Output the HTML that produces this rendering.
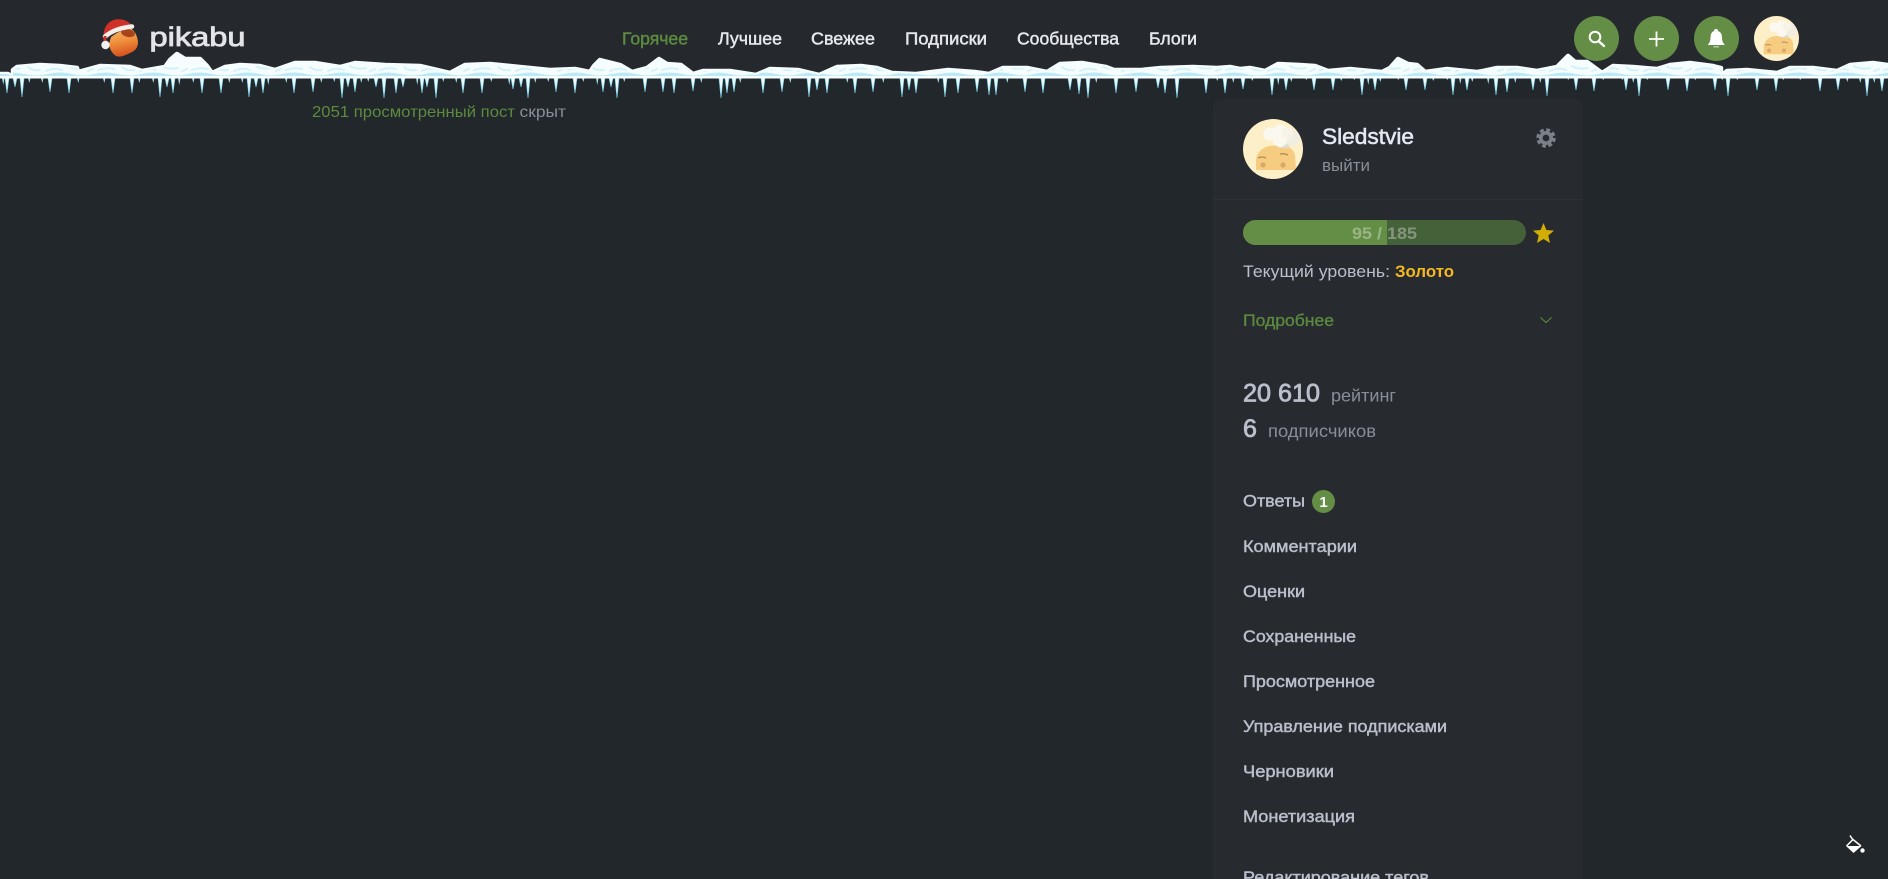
<!DOCTYPE html>
<html lang="ru">
<head>
<meta charset="utf-8">
<title>Просмотренное – Pikabu</title>
<style>
html,body{margin:0;padding:0;width:1888px;height:879px;overflow:hidden;background:#22272b}
svg{display:block;position:absolute;left:0;top:0}
text{font-family:"Liberation Sans",Arial,sans-serif}
.m{stroke-width:.45px;stroke:currentColor}
.nav{font-size:17.5px;fill:#e6e8ec;color:#e6e8ec}
.side{font-size:17px;fill:#b9bfcb;color:#b9bfcb}
.gray{font-size:16.5px;fill:#888e97}
</style>
</head>
<body>
<svg width="1888" height="879" viewBox="0 0 1888 879" xmlns="http://www.w3.org/2000/svg">
<defs>
<path id="snow" d="M0 78V74L8 74L13 77L13 70L17 67L40 65L60 66L77 68L78 72L100 66L130 67L142 71L165 67L170 60L177 54L185 59L200 59L207 66L212 73L225 67L240 65L260 66L275 70L295 63L315 63L340 67L355 63L385 65L420 66L450 73L465 65L490 64L520 67L550 70L575 69L590 72L594 66L600 60L620 65L632 72L647 68L659 59L667 64L681 65L693 74L703 71L730 71L756 75L770 69L798 70L819 75L837 67L861 66L877 68L892 73L916 74L948 70L975 72L989 74L1003 68L1027 68L1047 72L1060 64L1082 63L1106 67L1114 70L1141 70L1161 68L1193 67L1217 68L1230 67L1240 69L1250 68L1265 71L1278 64L1300 65L1315 66L1328 71L1350 69L1360 70L1382 72L1390 68L1398 59L1408 64L1417 65L1425 72L1447 69L1457 70L1477 72L1483 71L1497 68L1517 68L1537 71L1557 67L1568 56L1575 62L1587 62L1602 73L1613 66L1633 67L1657 69L1670 65L1690 63L1713 66L1721 68L1721 77L1722 75L1727 71L1747 70L1777 73L1790 68L1813 68L1837 71L1850 65L1873 63L1888 65V78Z"/>
<pattern id="tex" patternUnits="userSpaceOnUse" width="94" height="78">
<path d="M0 74Q12 71 24 74T48 74T72 74T94 74V76H0Z" fill="#bce9f6"/>
<g fill="none" stroke="#d4f1fa" stroke-width="2" stroke-linecap="round">
<path d="M4 70Q12 67 20 69"/><path d="M28 67Q32 71 40 70"/><path d="M46 71Q54 67 62 70"/><path d="M68 66Q74 70 84 68"/><path d="M88 71L93 69"/>
</g>
</pattern>
<linearGradient id="body" x1="0" y1="0" x2=".2" y2="1"><stop offset="0" stop-color="#f8bd6d"/><stop offset=".5" stop-color="#f0933f"/><stop offset="1" stop-color="#d9551f"/></linearGradient>
<clipPath id="pf"><rect x="1243" y="220" width="144" height="25"/></clipPath>
<clipPath id="snowclip"><rect x="0" y="40" width="1888" height="38.500"/></clipPath>
<clipPath id="avc"><circle cx="30" cy="30" r="30"/></clipPath>
<symbol id="ava" viewBox="0 0 60 60">
<g clip-path="url(#avc)">
<rect width="60" height="60" fill="#fdf0c9"/>
<path d="M13 51V40Q15 30 26 27L40 26Q50 28 52 36L53 51Z" fill="#f6cd80"/>
<path d="M15 39Q19 37 23 39M37 35Q41 34 45 36" stroke="#b48a55" stroke-width="1.300" fill="none"/>
<circle cx="20" cy="46" r="2.600" fill="#d9a76a"/><circle cx="40" cy="46" r="2.600" fill="#d9a76a"/>
<path d="M32 20L48 18L46 29L36 29Z" fill="#e0dccf"/>
<circle cx="27" cy="15" r="6.500" fill="#fbf8ef"/><circle cx="37" cy="13" r="7.500" fill="#fbf8ef"/><circle cx="49" cy="19" r="8" fill="#f1ede0"/><circle cx="37" cy="21" r="7" fill="#fbf8ef"/><circle cx="44" cy="14" r="6" fill="#f7f3e8"/>
</g>
</symbol>
</defs>

<rect width="1888" height="79" fill="#25292e"/>
<rect x="1213" y="99" width="370" height="800" rx="8" fill="#272b2f"/>

<!-- logo -->
<path d="M111 37Q120 30 130 28Q137 32 138 42Q138 50 130 53Q120 58 116 56Q110 52 109 44Z" fill="url(#body)"/>
<ellipse cx="128" cy="33" rx="7" ry="4" fill="#a8441c" transform="rotate(12 128 33)"/>
<path d="M103.500 38Q103 23 115 19.500Q126 18 132 25.500L106 37Z" fill="#d0302a"/>
<path d="M105 36.500Q115 28 132 26.500" fill="none" stroke="#f5efe9" stroke-width="4.500" stroke-linecap="round"/>
<rect x="103.500" y="36" width="3" height="6" fill="#d0302a"/>
<circle cx="105.500" cy="45" r="4.200" fill="#f0f0f0"/>
<text x="149.500" y="46" font-size="27" textLength="96" lengthAdjust="spacingAndGlyphs" fill="#e3e4e8" stroke="#e3e4e8" stroke-width=".8">pikabu</text>

<!-- nav -->
<g>
<text class="nav m" x="622" y="44.500" textLength="66" lengthAdjust="spacingAndGlyphs" style="fill:#5c8a3f;color:#5c8a3f">Горячее</text>
<text class="nav m" x="718" y="44.500" textLength="64" lengthAdjust="spacingAndGlyphs">Лучшее</text>
<text class="nav m" x="811" y="44.500" textLength="64" lengthAdjust="spacingAndGlyphs">Свежее</text>
<text class="nav m" x="905" y="44.500" textLength="82" lengthAdjust="spacingAndGlyphs">Подписки</text>
<text class="nav m" x="1017" y="44.500" textLength="102" lengthAdjust="spacingAndGlyphs">Сообщества</text>
<text class="nav m" x="1149" y="44.500" textLength="48" lengthAdjust="spacingAndGlyphs">Блоги</text>
</g>

<!-- header buttons -->
<circle cx="1596.500" cy="38.500" r="22.500" fill="#648e46"/>
<circle cx="1656.500" cy="38.500" r="22.500" fill="#648e46"/>
<circle cx="1716.500" cy="38.500" r="22.500" fill="#648e46"/>
<circle cx="1595" cy="37" r="5.300" fill="none" stroke="#fff" stroke-width="2"/>
<path d="M1599 41.500L1604 46" stroke="#fff" stroke-width="2.400" stroke-linecap="round"/>
<path d="M1649 39H1664M1656.500 31.500V46.500" stroke="#fff" stroke-width="1.800"/>
<path d="M1716 29Q1718 29 1718 31Q1722 32 1722 38Q1722 42 1724.500 44.500V45H1708V44.500Q1710.500 42 1710.500 38Q1710.500 32 1714 31Q1714 29 1716 29ZM1713.500 46.500H1719V47.200H1713.500Z" fill="#fff"/>
<use href="#ava" x="1754" y="16" width="45" height="45"/>

<!-- snow -->
<path d="M5 78h4l-2 15zM13 78h4l-2 9zM20 78h4l-2 19zM48 78h4l-2 14zM67 78h4l-2 15zM111 78h4l-2 15zM130 78h4l-2 15zM158 78h4l-2 19zM165 78h4l-2 9zM171 78h4l-2 15zM200 78h4l-2 15zM219 78h4l-2 15zM247 78h4l-2 19zM254 78h4l-2 9zM261 78h4l-2 15zM292 78h4l-2 15zM311 78h4l-2 14zM340 78h4l-2 20zM346 78h4l-2 9zM353 78h4l-2 14zM374 78h4l-2 9zM382 78h4l-2 20zM394 78h4l-2 15zM401 78h4l-2 9zM420 78h4l-2 15zM425 78h4l-2 9zM434 78h4l-2 20zM461 78h4l-2 15zM480 78h4l-2 15zM511 78h4l-2 11zM519 78h4l-2 9zM526 78h4l-2 20zM554 78h4l-2 14zM573 78h4l-2 15zM601 78h4l-2 14zM609 78h4l-2 9zM615 78h4l-2 20zM643 78h4l-2 14zM661 78h4l-2 14zM672 78h4l-2 15zM691 78h4l-2 13zM719 78h4l-2 20zM725 78h4l-2 15zM732 78h4l-2 14zM761 78h4l-2 15zM780 78h4l-2 14zM807 78h4l-2 19zM815 78h4l-2 12zM825 78h4l-2 15zM853 78h4l-2 15zM871 78h4l-2 14zM900 78h4l-2 19zM907 78h4l-2 12zM914 78h4l-2 15zM943 78h4l-2 19zM956 78h4l-2 15zM975 78h4l-2 14zM987 78h4l-2 17zM994 78h4l-2 17zM1023 78h4l-2 14zM1041 78h4l-2 15zM1068 78h4l-2 12zM1077 78h4l-2 16zM1086 78h4l-2 20zM1114 78h4l-2 15zM1134 78h4l-2 14zM1156 78h4l-2 10zM1163 78h4l-2 15zM1175 78h4l-2 20zM1204 78h4l-2 15zM1223 78h4l-2 15zM1241 78h4l-2 11zM1270 78h4l-2 17zM1284 78h4l-2 12zM1312 78h4l-2 12zM1331 78h4l-2 12zM1360 78h4l-2 17zM1373 78h4l-2 12zM1404 78h4l-2 12zM1423 78h4l-2 12zM1451 78h4l-2 17zM1465 78h4l-2 12zM1494 78h4l-2 17zM1505 78h4l-2 14zM1531 78h4l-2 12zM1545 78h4l-2 18zM1574 78h4l-2 12zM1592 78h4l-2 13zM1624 78h4l-2 12zM1637 78h4l-2 18zM1666 78h4l-2 12zM1685 78h4l-2 13zM1713 78h4l-2 12zM1726 78h4l-2 18zM1755 78h4l-2 12zM1774 78h4l-2 13zM1818 78h4l-2 13zM1836 78h4l-2 12zM1865 78h4l-2 18zM1880 78h4l-2 13z" fill="#eefbff" stroke="#7dd3ea" stroke-width=".7"/>
<path d="M2 78h2.500l-1.200 7zM28 78h2.500l-1.200 5zM41 78h2.500l-1.200 5zM77 78h2.500l-1.200 5zM103 78h2.500l-1.200 5zM138 78h2.500l-1.200 5zM152 78h2.500l-1.200 5zM178 78h2.500l-1.200 7zM192 78h2.500l-1.200 5zM228 78h2.500l-1.200 5zM241 78h2.500l-1.200 5zM267 78h2.500l-1.200 7zM285 78h2.500l-1.200 5zM320 78h2.500l-1.200 5zM333 78h2.500l-1.200 4zM360 78h2.500l-1.200 5zM367 78h2.500l-1.200 4zM416 78h2.500l-1.200 7zM442 78h2.500l-1.200 4zM455 78h2.500l-1.200 5zM490 78h2.500l-1.200 4zM508 78h2.500l-1.200 7zM534 78h2.500l-1.200 5zM547 78h2.500l-1.200 4zM582 78h2.500l-1.200 4zM596 78h2.500l-1.200 7zM623 78h2.500l-1.200 4zM700 78h2.500l-1.200 5zM739 78h2.500l-1.200 5zM789 78h2.500l-1.200 5zM846 78h2.500l-1.200 5zM882 78h2.500l-1.200 5zM937 78h2.500l-1.200 5zM1006 78h2.500l-1.200 5zM1095 78h2.500l-1.200 5zM1216 78h2.500l-1.200 3zM1232 78h2.500l-1.200 5zM1251 78h2.500l-1.200 3zM1277 78h2.500l-1.200 7zM1290 78h2.500l-1.200 4zM1305 78h2.500l-1.200 2zM1340 78h2.500l-1.200 3zM1353 78h2.500l-1.200 2zM1367 78h2.500l-1.200 7zM1379 78h2.500l-1.200 4zM1397 78h2.500l-1.200 2zM1432 78h2.500l-1.200 3zM1446 78h2.500l-1.200 2zM1459 78h2.500l-1.200 6zM1471 78h2.500l-1.200 4zM1487 78h2.500l-1.200 6zM1514 78h2.500l-1.200 5zM1539 78h2.500l-1.200 5zM1567 78h2.500l-1.200 2zM1602 78h2.500l-1.200 2zM1621 78h2.500l-1.200 2zM1632 78h2.500l-1.200 5zM1646 78h2.500l-1.200 2zM1694 78h2.500l-1.200 2zM1721 78h2.500l-1.200 2zM1736 78h2.500l-1.200 2zM1782 78h2.500l-1.200 2zM1799 78h2.500l-1.200 2zM1846 78h2.500l-1.200 4zM1859 78h2.500l-1.200 5zM1873 78h2.500l-1.200 5z" fill="#a9e3f3"/>
<g clip-path="url(#snowclip)">
<use href="#snow" fill="#f6fdff" stroke="#f6fdff" stroke-width="4.500" stroke-linejoin="round"/>
<use href="#snow" fill="url(#tex)"/>
</g>
<rect y="76" width="1888" height="2.500" fill="#f6fdff"/>

<!-- viewed text -->
<text x="312" y="117" font-size="16" textLength="203" lengthAdjust="spacingAndGlyphs" fill="#5c8a3f">2051 просмотренный пост</text>
<text x="519.500" y="117" font-size="16" textLength="46.500" lengthAdjust="spacingAndGlyphs" fill="#888e97">скрыт</text>

<!-- profile -->
<use href="#ava" x="1243" y="119" width="60" height="60"/>
<text class="m" x="1322" y="144" font-size="22" textLength="92" lengthAdjust="spacingAndGlyphs" style="fill:#e4e8f0;color:#e4e8f0;stroke-width:.55px">Sledstvie</text>
<text class="gray" x="1322" y="171" textLength="48" lengthAdjust="spacingAndGlyphs">выйти</text>
<circle cx="1546" cy="138" r="8" fill="none" stroke="#7b8088" stroke-width="3.400" stroke-dasharray="3.800 2.480"/>
<circle cx="1546" cy="138" r="5.200" fill="none" stroke="#7b8088" stroke-width="3.600"/>
<rect x="1213" y="199" width="370" height="1" fill="#2e3237"/>

<!-- level -->
<rect x="1243" y="220" width="283" height="25" rx="12.500" fill="#45613a"/>
<rect x="1243" y="220" width="283" height="25" rx="12.500" fill="#648e46" clip-path="url(#pf)"/>
<text x="1352" y="239" font-size="17" font-weight="700" textLength="65" lengthAdjust="spacingAndGlyphs" fill="#fff" fill-opacity=".34">95 / 185</text>
<polygon points="1543.500,223 1546.400,230 1554,230.600 1548.300,235.500 1550,243 1543.500,239 1537,243 1538.700,235.500 1533,230.600 1540.600,230" fill="#d1ad06"/>
<text x="1243" y="277" font-size="17" textLength="147" lengthAdjust="spacingAndGlyphs" fill="#b9bfcb">Текущий уровень:</text>
<text x="1395" y="277" font-size="17" font-weight="700" textLength="59" lengthAdjust="spacingAndGlyphs" fill="#f6b91f">Золото</text>
<text class="m" x="1243" y="326" font-size="17" textLength="91" lengthAdjust="spacingAndGlyphs" style="fill:#5c8a3f;color:#5c8a3f;stroke-width:.3px">Подробнее</text>
<path d="M1540.500 317.500L1546 322.500L1551.500 317.500" fill="none" stroke="#5c8a3f" stroke-width="1.100"/>

<!-- stats -->
<text class="m" x="1243" y="401.500" font-size="25" textLength="77" lengthAdjust="spacingAndGlyphs" style="fill:#b9bfcb;color:#b9bfcb;stroke-width:.8px">20 610</text>
<text class="gray" x="1331" y="401.500" textLength="65" lengthAdjust="spacingAndGlyphs" style="font-size:17.5px">рейтинг</text>
<text class="m" x="1243" y="437" font-size="25" style="fill:#b9bfcb;color:#b9bfcb;stroke-width:.8px">6</text>
<text class="gray" x="1268" y="437" textLength="108" lengthAdjust="spacingAndGlyphs" style="font-size:17.5px">подписчиков</text>

<!-- menu -->
<text class="side m" x="1243" y="506.500" textLength="62" lengthAdjust="spacingAndGlyphs">Ответы</text>
<circle cx="1323.500" cy="501.500" r="11.500" fill="#648e46"/>
<text x="1323.500" y="507" font-size="15" font-weight="700" text-anchor="middle" fill="#fff">1</text>
<text class="side m" x="1243" y="552" textLength="114" lengthAdjust="spacingAndGlyphs">Комментарии</text>
<text class="side m" x="1243" y="597" textLength="62" lengthAdjust="spacingAndGlyphs">Оценки</text>
<text class="side m" x="1243" y="642" textLength="113" lengthAdjust="spacingAndGlyphs">Сохраненные</text>
<text class="side m" x="1243" y="687" textLength="132" lengthAdjust="spacingAndGlyphs">Просмотренное</text>
<text class="side m" x="1243" y="732" textLength="204" lengthAdjust="spacingAndGlyphs">Управление подписками</text>
<text class="side m" x="1243" y="777" textLength="91" lengthAdjust="spacingAndGlyphs">Черновики</text>
<text class="side m" x="1243" y="822" textLength="112" lengthAdjust="spacingAndGlyphs">Монетизация</text>
<text class="side m" x="1243" y="883" textLength="186" lengthAdjust="spacingAndGlyphs">Редактирование тегов</text>

<!-- paint bucket -->
<path d="M1850 835.500L1853 840" stroke="#fff" stroke-width="1.500" fill="none"/>
<path d="M1846.500 846L1853 839.500L1861 846" fill="none" stroke="#fff" stroke-width="1.500"/>
<path d="M1846 846H1861.500L1853.500 853Z" fill="#fff"/>
<circle cx="1862.500" cy="850.500" r="2.200" fill="#fff"/>
</svg>
</body>
</html>
